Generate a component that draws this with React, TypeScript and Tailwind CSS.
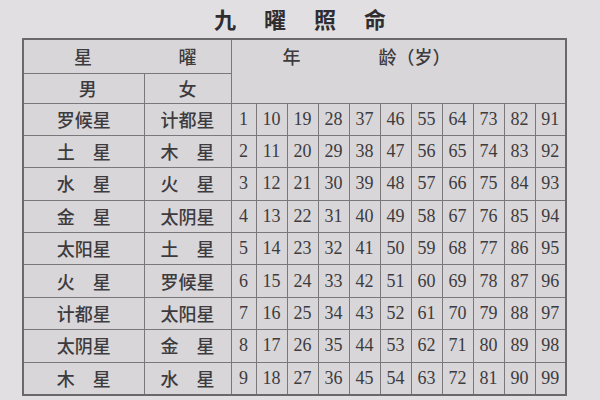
import React from "react";

const rows: [string, string][] = [
  ["罗候星", "计都星"],
  ["土　星", "木　星"],
  ["水　星", "火　星"],
  ["金　星", "太阴星"],
  ["太阳星", "土　星"],
  ["火　星", "罗候星"],
  ["计都星", "太阳星"],
  ["太阴星", "金　星"],
  ["木　星", "水　星"],
];

const cjk = { fontFamily: '"Noto Sans CJK SC", "Noto Sans", sans-serif' };
const serif = { fontFamily: '"Liberation Serif", "DejaVu Serif", serif' };

export default function App() {
  return (
    <div className="w-[600px] h-[400px] overflow-hidden bg-[#e1dfe1] text-[#3d3b3e]">
      <div className="h-[38px] flex items-center justify-center pb-[2px]">
        <div className="flex gap-[28px] text-[22px] font-bold leading-none text-[#2f2d30]" style={cjk}>
          <span>九</span>
          <span>曜</span>
          <span>照</span>
          <span>命</span>
        </div>
      </div>
      <div className="pl-[22px]">
        <table className="border-collapse bg-[#d8d6d8] border-[2px] border-[#6a686b]">
          <colgroup>
            <col className="w-[121px]" />
            <col className="w-[87px]" />
            <col className="w-[25px]" />
            {Array.from({ length: 10 }).map((_, i) => (
              <col key={i} className="w-[31px]" />
            ))}
          </colgroup>
          <tbody>
            <tr className="h-[34px]">
              <td colSpan={2} className="border border-[#7a787b] p-0" style={cjk}>
                <div className="flex justify-between pl-[50px] pr-[34px] text-[18px] font-medium">
                  <span>星</span>
                  <span>曜</span>
                </div>
              </td>
              <td colSpan={11} rowSpan={2} className="border border-[#7a787b] p-0 align-top" style={cjk}>
                <div className="flex pt-[3px] text-[18px] font-medium">
                  <span className="ml-[51px]">年</span>
                  <span className="ml-[78px]">龄（岁）</span>
                </div>
              </td>
            </tr>
            <tr className="h-[30px]">
              <td className="border border-[#7a787b] text-center text-[18px] font-medium p-0 pl-[8px]" style={cjk}>男</td>
              <td className="border border-[#7a787b] text-center text-[18px] font-medium p-0" style={cjk}>女</td>
            </tr>
            {rows.map((r, i) => (
              <tr key={i} className="h-[32.4px]">
                <td className="border border-[#7a787b] text-center text-[18px] font-medium p-0" style={cjk}>{r[0]}</td>
                <td className="border border-[#7a787b] text-center text-[18px] font-medium p-0" style={cjk}>{r[1]}</td>
                {Array.from({ length: 11 }).map((_, j) => (
                  <td key={j} className="border border-[#7a787b] text-center text-[18px] p-0" style={serif}>
                    {i + 1 + j * 9}
                  </td>
                ))}
              </tr>
            ))}
          </tbody>
        </table>
      </div>
    </div>
  );
}
